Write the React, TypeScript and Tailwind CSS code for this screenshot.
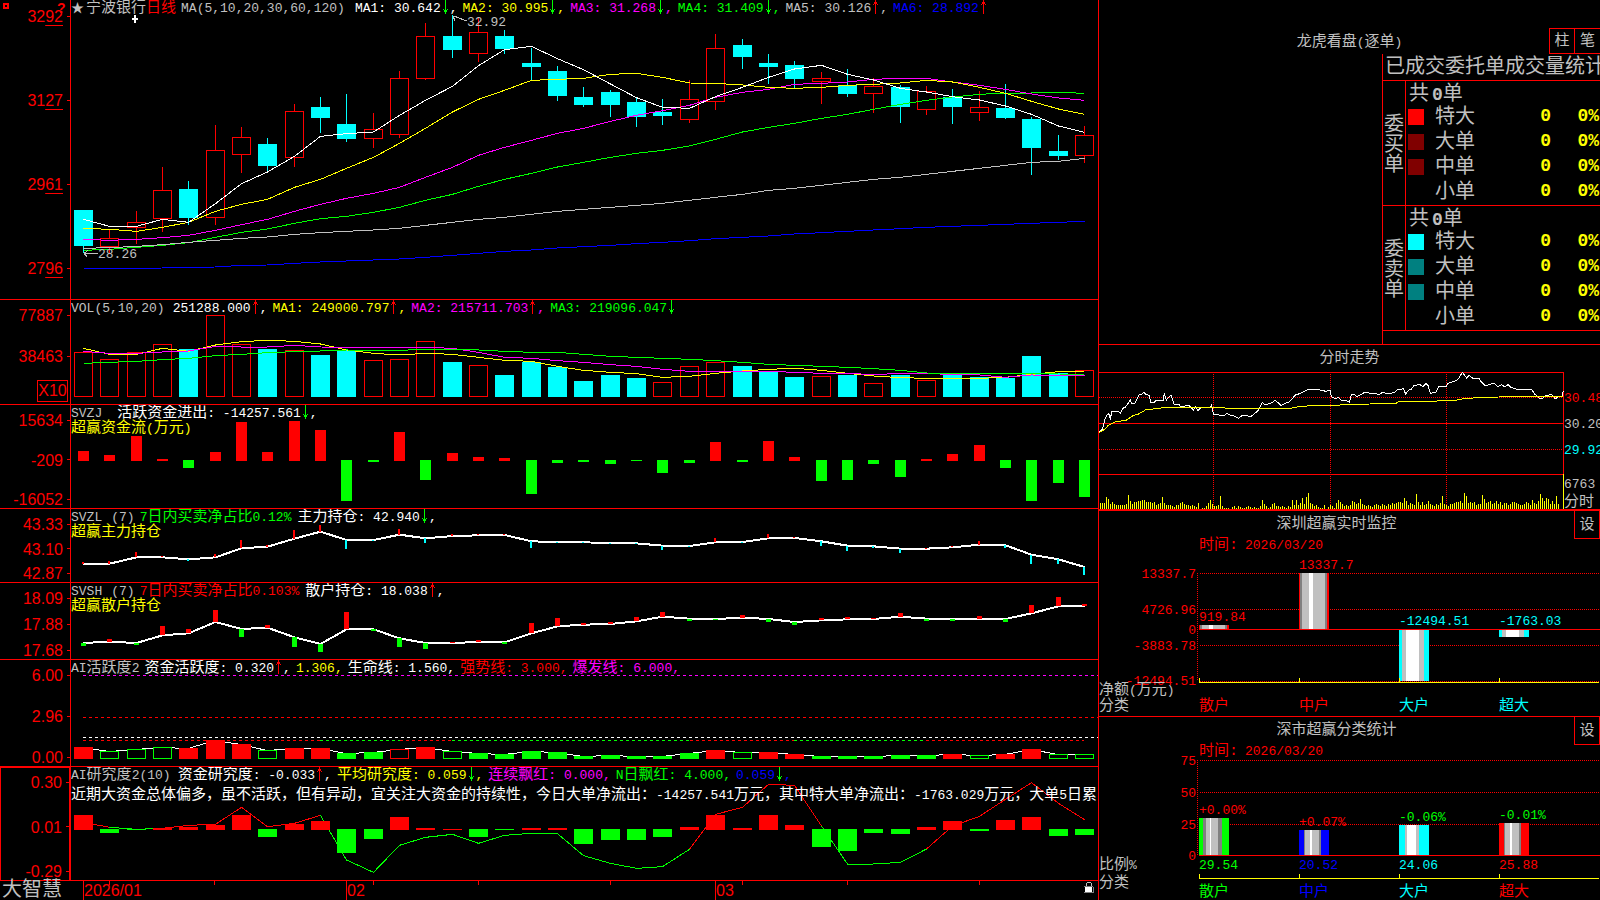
import type { ReactNode } from "react";

const STEP = 26.34;
const cx = (i: number) => Math.round(83 + STEP * i);

// kind, high, body top, body bottom, low
const candles: [string, number, number, number, number][] = [
  ["d", 210, 210, 246, 253], ["u", 230, 238, 246, 253], ["u", 211, 222, 227, 244], ["u", 167, 190, 218, 232],
  ["d", 181, 189, 218, 225], ["u", 125, 150, 217, 225], ["u", 127, 137, 154, 173], ["d", 138, 144, 166, 171],
  ["u", 104, 111, 157, 167], ["d", 97, 107, 118, 133], ["d", 94, 124, 139, 142], ["u", 113, 129, 138, 148],
  ["u", 71, 78, 134, 138], ["u", 23, 36, 78, 80], ["d", 15, 36, 50, 58], ["u", 18, 32, 53, 62],
  ["d", 30, 36, 49, 54], ["d", 48, 63, 67, 80], ["d", 66, 71, 96, 101], ["d", 87, 97, 105, 107],
  ["d", 90, 92, 105, 117], ["d", 97, 102, 117, 127], ["d", 99, 112, 116, 125], ["u", 80, 99, 119, 123],
  ["u", 34, 48, 101, 110], ["d", 39, 45, 57, 69], ["d", 54, 63, 67, 84], ["d", 61, 65, 79, 88],
  ["u", 72, 78, 81, 104], ["d", 69, 85, 94, 97], ["u", 78, 86, 93, 113], ["d", 85, 87, 107, 123],
  ["u", 86, 91, 109, 115], ["d", 89, 97, 107, 124], ["u", 91, 107, 112, 121], ["d", 84, 108, 118, 119],
  ["d", 117, 119, 148, 175], ["d", 135, 151, 156, 160], ["u", 126, 135, 155, 163],
];

// line values are stored in thirds of a pixel
const priceLines: [string, number[]][] = [
  ["#0000ff", [805, 805, 805, 804, 802, 801, 796, 795, 790, 786, 783, 780, 777, 772, 766, 760, 754, 750, 744, 740, 736, 731, 727, 722, 716, 712, 708, 702, 698, 694, 690, 686, 682, 679, 676, 673, 670, 667, 664]],
  ["#00ff00", [751, 748, 742, 736, 728, 712, 697, 687, 670, 656, 649, 637, 622, 601, 583, 559, 538, 520, 501, 487, 472, 460, 451, 438, 418, 396, 382, 370, 355, 343, 328, 313, 301, 291, 283, 279, 279, 277, 280]],
  ["#c0c0c0", [745, 743, 739, 734, 727, 721, 715, 711, 703, 698, 694, 690, 685, 676, 667, 658, 652, 643, 634, 628, 622, 616, 610, 601, 592, 583, 571, 565, 556, 547, 538, 532, 523, 514, 505, 496, 487, 484, 475]],
  ["#ff00ff", [718, 721, 718, 713, 706, 691, 674, 658, 634, 613, 595, 580, 562, 532, 502, 466, 442, 421, 400, 385, 364, 346, 332, 316, 292, 277, 268, 253, 250, 246, 238, 235, 235, 246, 256, 268, 282, 294, 301]],
  ["#ffff00", [685, 688, 694, 682, 667, 634, 613, 598, 562, 538, 505, 472, 430, 385, 336, 298, 271, 241, 238, 235, 223, 220, 232, 249, 250, 255, 262, 265, 262, 256, 253, 249, 241, 246, 262, 280, 304, 327, 343]],
  ["#ffffff", [658, 679, 679, 658, 667, 611, 551, 516, 469, 409, 401, 396, 346, 301, 259, 197, 149, 139, 176, 209, 252, 293, 322, 325, 290, 262, 232, 207, 196, 223, 240, 265, 276, 290, 300, 318, 343, 378, 397]],
];

const volumes: [string, number][] = [
  ["u", 352], ["u", 359], ["u", 352], ["u", 344], ["d", 349], ["u", 315], ["u", 344], ["d", 349], ["u", 350], ["d", 355],
  ["d", 350], ["u", 360], ["u", 359], ["u", 341], ["d", 362], ["u", 365], ["d", 375], ["d", 362], ["d", 367], ["d", 381],
  ["d", 375], ["d", 378], ["u", 382], ["u", 366], ["u", 362], ["d", 366], ["d", 371], ["d", 377], ["u", 376], ["d", 375],
  ["u", 383], ["d", 375], ["u", 380], ["d", 374], ["d", 377], ["d", 378], ["d", 356], ["d", 373], ["u", 370],
];

const volumeLines: [string, number[]][] = [
  ["#ffff00", [160, 178, 178, 160, 169, 150, 140, 136, 139, 147, 165, 175, 180, 175, 178, 187, 196, 199, 214, 226, 232, 236, 247, 244, 235, 228, 223, 220, 226, 235, 243, 248, 250, 250, 250, 247, 238, 230, 229]],
  ["#ff00ff", [169, 175, 175, 171, 168, 154, 156, 156, 151, 156, 157, 157, 157, 157, 160, 172, 187, 190, 197, 202, 209, 214, 223, 229, 229, 229, 229, 232, 235, 236, 238, 236, 236, 238, 240, 247, 240, 241, 241]],
  ["#00ff00", [205, 202, 199, 194, 190, 182, 178, 173, 170, 168, 165, 166, 166, 163, 163, 165, 169, 172, 172, 178, 184, 187, 190, 193, 197, 202, 208, 211, 214, 217, 221, 226, 234, 235, 235, 237, 236, 237, 238]],
];

const flows = [10, 6, 25, 2, -8, 9, 39, 9, 40, 31, -41, -2, 29, -20, 8, 4, 3, -34, -3, -2, -4, -1, -13, -3, 19, -2, 20, 4, -21, -20, -4, -17, 2, 7, 16, -8, -41, -23, -37];

const mainHold = [177, 176, 157, 157, 163, 157, 130, 125, 101, 80, 105, 105, 89, 100, 93, 91, 90, 109, 111, 112, 114, 115, 122, 123, 112, 111, 100, 99, 109, 122, 124, 131, 131, 127, 119, 121, 149, 163, 186];
const mainDelta = [2, 3, 5, 1, -2, 3, 8, 2, 9, 7, -9, -1, 6, -5, 2, 1, 1, -7, -1, -1, -1, -1, -4, -1, 4, -1, 4, 1, -5, -5, -2, -4, 1, 1, 4, -3, -9, -5, -8];
const retailHold = [414, 410, 414, 391, 385, 351, 372, 368, 397, 417, 373, 373, 400, 414, 414, 411, 412, 385, 364, 359, 357, 349, 335, 341, 342, 338, 342, 351, 346, 343, 342, 335, 341, 342, 342, 342, 325, 304, 302];
const retailDelta = [-3, 3, -2, 9, 4, 12, -8, 3, -10, -8, 17, -2, -9, -6, 1, 2, -2, 10, 8, 2, 2, 4, 5, -2, -1, 3, -3, -3, 2, 2, 1, 4, -2, -2, 3, -3, 8, 9, 2];

const activity = [12, 8, 10, 12, 11, 19, 15, 9, 11, 11, 6, 7, 10, 12, 8, 6, 5, 8, 7, 3, 4, 3, 3, 6, 9, 7, 7, 5, 3, 3, 3, 4, 4, 5, 4, 5, 10, 5, 5];
// R/G solid, r/g hollow
const activityKinds = "RgggRRRgRRGGrRgGGGGGGGGGRgRRGGGGGRgRRgg";

const study = [15, -4, -1, 2, 3, 5, 15, -8, 6, 9, -24, -10, 13, 2, 1, -8, -1, 2, 2, -15, -11, -11, -8, 3, 15, 2, 15, 5, -18, -22, -4, -5, 3, 9, -2, 10, 13, -7, -6];
const studyLine = [367, 382, 388, 385, 376, 373, 322, 380, 370, 346, 480, 517, 436, 412, 403, 430, 406, 400, 401, 467, 490, 505, 500, 448, 343, 322, 253, 256, 378, 492, 492, 487, 447, 378, 349, 298, 248, 310, 359];
const studySegments: [number, number, string][] = [
  [0, 1, "#ff0000"], [1, 3, "#00ff00"], [3, 9, "#ff0000"], [9, 23, "#00ff00"], [23, 28, "#ff0000"], [28, 32, "#00ff00"], [32, 38, "#ff0000"],
];

const minutePrice =
  "28,276 38,266 44,240 50,226 56,220 61,236 66,213 86,214 91,220 98,205 106,202 121,180 124,190 134,190 147,164 156,162 161,157 166,162 177,166 183,188 191,188 200,180 220,180 223,160 229,180 236,172 243,166 252,192 266,192 272,200 296,196 310,210 318,200 324,212 332,204 360,203 364,197 371,223 396,226 402,228 410,220 422,226 432,228 446,235 454,228 466,226 482,230 492,222 504,212 517,188 524,194 542,190 556,181 574,197 584,190 598,186 616,165 632,160 652,149 690,150 708,154 720,150 724,170 736,176 744,172 756,183 766,180 778,187 784,164 792,162 800,170 812,164 822,158 850,160 868,163 880,156 890,162 912,158 922,150 940,146 947,162 956,150 964,148 972,136 990,134 998,140 1008,130 1014,136 1021,160 1038,156 1046,140 1068,140 1074,130 1092,124 1104,118 1117,97 1124,106 1130,114 1138,106 1150,116 1166,114 1172,124 1186,138 1204,132 1214,130 1222,140 1234,134 1244,140 1254,134 1262,142 1282,148 1326,150 1334,162 1350,176 1360,174 1366,166 1386,164 1396,177 1404,170 1416,168 1420,152";
const minuteAverage =
  "28,277 44,268 54,257 74,246 110,240 130,226 146,222 166,210 190,207 222,203 402,203 408,205 600,205 628,200 664,197 748,196 752,193 842,192 846,189 920,189 924,186 970,185 1040,184 1044,181 1098,181 1120,176 1166,173 1226,171 1232,169 1420,169";
// one base-36 digit per bar
const minuteVolume =
  "666ca575444445e8577889977767456c6444324467544343260113695334d31110231321123212113953125633232132949" +
  "46b5cg6534211402431697534348756a543432454354354656776" +
  "b84654f74745854354" +
  "6d543556778" +
  "6gd676745" +
  "5ea678568574664577654457649658fb8ba585d5";

const fonts = "font-['Liberation_Mono','Noto_Sans_CJK_SC',monospace]";

const trace = (values: number[], origin: number, from = 0) =>
  values.map((v, i) => `${cx(i + from) + 0.5},${origin + v / 3}`).join(" ");

// Chinese runs are set larger than the half-width characters around them
function Mixed({ text }: { text: string }) {
  return (
    <>
      {text.split(/([\u2e80-\u9fff\uff00-\uffef]+)/).map((part, i) =>
        i % 2 ? <span key={i} className="text-[15px]">{part}</span> : part
      )}
    </>
  );
}

function Arrow({ up }: { up?: boolean }) {
  return (
    <svg viewBox="0 0 9 16" className="w-[9px] h-4 shrink-0" shapeRendering="crispEdges">
      {up ? (
        <path d="M4 0h1v14H4zM3 2h3v2H3zM2 4h1v1H2zM6 4h1v1H6z" fill="#ff0000" />
      ) : (
        <path d="M4 0h1v14H4zM3 10h3v2H3zM2 9h1v1H2zM6 9h1v1H6z" fill="#00ff00" />
      )}
    </svg>
  );
}

type Item = { text: string; color: string; arrow?: "up" | "down"; comma?: boolean };

function Legend({ items }: { items: Item[] }) {
  return (
    <div className="flex h-4 items-center gap-[5px] leading-[18px]">
      {items.map((item, i) => (
        <span key={i} className={`flex h-4 shrink-0 ${item.color}`}>
          <span><Mixed text={item.text} /></span>
          {item.arrow && <Arrow up={item.arrow === "up"} />}
          {item.comma && <span>,</span>}
        </span>
      ))}
    </div>
  );
}

function Tick({ label, underlined }: { label: string; underlined?: boolean }) {
  return (
    <div className="flex h-[18px] items-center justify-end gap-1 text-base leading-[18px]">
      <span className="pt-0.5">
        {underlined ? (
          <>
            {label.slice(0, 2)}
            <span className="underline decoration-1 underline-offset-[3px]">{label.slice(2)}</span>
          </>
        ) : label}
      </span>
      <span className="w-[3px] h-px bg-[#ff0000]" />
    </div>
  );
}

function Axis({ className = "", children }: { className?: string; children: ReactNode }) {
  return (
    <div className={`relative flex w-[71px] shrink-0 flex-col justify-between border-r border-[#ff0000] font-['Liberation_Sans',sans-serif] text-[#ff0000] ${className}`}>
      {children}
    </div>
  );
}

function Panel({ axis, header, top, height, children }: { axis: ReactNode; header: ReactNode; top: number; height: number; children: ReactNode }) {
  return (
    <section className="flex border-b border-[#ff0000]">
      {axis}
      <div className="grid min-w-0 flex-1 overflow-hidden">
        <svg
          viewBox={`71 ${top} 1027 ${height}`}
          preserveAspectRatio="none"
          shapeRendering="crispEdges"
          fill="none"
          className="[grid-area:1/1] w-full"
          style={{ height }}
        >
          {children}
        </svg>
        <div className="[grid-area:1/1] min-w-0 overflow-hidden whitespace-pre">{header}</div>
      </div>
    </section>
  );
}

function PricePanel() {
  return (
    <Panel
      top={0}
      height={299}
      axis={
        <Axis className="pt-[7px] pb-[22px]">
          <span className="absolute top-[3px] left-[3px] size-[6px] border-2 border-[#ff0000]" />
          <span className="absolute top-0 left-[57px] text-sm font-bold leading-4">?</span>
          {["3292", "3127", "2961", "2796"].map((t) => <Tick key={t} label={t} underlined />)}
        </Axis>
      }
      header={
        <Legend
          items={[
            { text: "★", color: "text-[#c0c0c0]" },
            { text: "宁波银行", color: "text-[#c0c0c0] -ml-[3px]" },
            { text: "日线", color: "text-[#ff0000] -ml-[5px]" },
            { text: "MA(5,10,20,30,60,120)", color: "text-[#c0c0c0] mr-[5px]" },
            { text: "MA1: 30.642", color: "text-white", arrow: "down", comma: true },
            { text: "MA2: 30.995", color: "text-[#ffff00]", arrow: "down", comma: true },
            { text: "MA3: 31.268", color: "text-[#ff00ff]", arrow: "down", comma: true },
            { text: "MA4: 31.409", color: "text-[#00ff00]", arrow: "down", comma: true },
            { text: "MA5: 30.126", color: "text-[#c0c0c0]", arrow: "up", comma: true },
            { text: "MA6: 28.892", color: "text-[#0000ff]", arrow: "up" },
          ]}
        />
      }
    >
      {candles.map(([kind, hi, top, bottom, lo], i) =>
        kind === "u" ? (
          <g key={i} stroke="#ff0000">
            <path d={`M${cx(i) + 0.5} ${hi}V${top}M${cx(i) + 0.5} ${bottom}V${lo}`} />
            <rect x={cx(i) - 8.5} y={top + 0.5} width="18" height={bottom - top} />
          </g>
        ) : (
          <g key={i} fill="#00ffff">
            <rect x={cx(i)} y={hi} width="1" height={lo - hi} />
            <rect x={cx(i) - 9} y={top} width="19" height={bottom - top} />
          </g>
        )
      )}
      {priceLines.map(([color, values]) => (
        <polyline key={color} points={trace(values, 0)} stroke={color} />
      ))}
      <g stroke="#c0c0c0">
        <path d="M453 16l14 5M453 16l4 0M453 16l2 5" />
        <path d="M84 253.500h14M84 253.500l4 -3M84 253.500l3 3" />
      </g>
      <g fill="#c0c0c0" className="text-[13px]">
        <text x="467" y="26">32.92</text>
        <text x="98" y="258">28.26</text>
      </g>
      <path d="M134 15h2v8h-2zM132 18h6v2h-6z" fill="#fff" />
    </Panel>
  );
}

function VolumePanel() {
  return (
    <Panel
      top={300}
      height={104}
      axis={
        <Axis className="pt-[6px] pb-[2px]">
          <div className="flex flex-col gap-[23px]">
            <Tick label="77887" />
            <Tick label="38463" />
          </div>
          <div className="mr-[2px] flex h-[22px] w-[31px] items-center justify-center self-end border border-[#ff0000] text-base">X10</div>
        </Axis>
      }
      header={
        <Legend
          items={[
            { text: "VOL(5,10,20)", color: "text-[#c0c0c0] mr-[3px]" },
            { text: "251288.000", color: "text-white", arrow: "up", comma: true },
            { text: "MA1: 249000.797", color: "text-[#ffff00]", arrow: "up", comma: true },
            { text: "MA2: 215711.703", color: "text-[#ff00ff]", arrow: "up", comma: true },
            { text: "MA3: 219096.047", color: "text-[#00ff00]", arrow: "down" },
          ]}
        />
      }
    >
      {volumes.map(([kind, top], i) =>
        kind === "u" ? (
          <rect key={i} x={cx(i) - 8.5} y={top + 0.5} width="18" height={396 - top} stroke="#ff0000" />
        ) : (
          <rect key={i} x={cx(i) - 9} y={top} width="19" height={397 - top} fill="#00ffff" />
        )
      )}
      {volumeLines.map(([color, values]) => (
        <polyline key={color} points={trace(values, 295)} stroke={color} />
      ))}
    </Panel>
  );
}

function Bars({ values, zero, width }: { values: number[]; zero: number; width: number }) {
  return (
    <>
      {values.map((v, i) => (
        <rect
          key={i}
          x={cx(i) - (width - 1) / 2}
          y={v > 0 ? zero + 1 - v : zero}
          width={width}
          height={Math.abs(v)}
          fill={v > 0 ? "#ff0000" : "#00ff00"}
        />
      ))}
    </>
  );
}

function HoldLine({ values, deltas, width, down }: { values: number[]; deltas: number[]; width: number; down: string }) {
  return (
    <>
      <polyline points={trace(values, 505)} stroke="#fff" strokeWidth="2" />
      {deltas.map((d, i) => {
        const y = Math.round(505 + values[i] / 3);
        return (
          <rect
            key={i}
            x={cx(i) - Math.floor(width / 2)}
            y={d > 0 ? y - d : y}
            width={width}
            height={Math.abs(d)}
            fill={d > 0 ? "#ff0000" : down}
          />
        );
      })}
    </>
  );
}

function Charts() {
  return (
    <>
      <PricePanel />
      <VolumePanel />
      <Panel
        top={405}
        height={103}
        axis={<Axis className="pt-[6px]"><Tick label="15634" /><Tick label="-209" /><Tick label="-16052" /></Axis>}
        header={
          <>
            <Legend
              items={[
                { text: "SVZJ", color: "text-[#c0c0c0] mr-2.5" },
                { text: "活跃资金进出: -14257.561", color: "text-white", arrow: "down", comma: true },
              ]}
            />
            <div className="leading-4 text-[#ffff00]"><Mixed text="超赢资金流(万元)" /></div>
          </>
        }
      >
        <Bars values={flows} zero={460} width={11} />
      </Panel>
      <Panel
        top={509}
        height={73}
        axis={<Axis className="pt-[6px]"><Tick label="43.33" /><Tick label="43.10" /><Tick label="42.87" /></Axis>}
        header={
          <>
            <Legend
              items={[
                { text: "SVZL", color: "text-[#c0c0c0] mr-1" },
                { text: "(7)", color: "text-[#c0c0c0]" },
                { text: "7日内买卖净占比0.12%", color: "text-[#00ff00] mr-px" },
                { text: "主力持仓: 42.940", color: "text-white", arrow: "down", comma: true },
              ]}
            />
            <div className="leading-4 text-[#ffff00]"><Mixed text="超赢主力持仓" /></div>
          </>
        }
      >
        <HoldLine values={mainHold} deltas={mainDelta} width={2} down="#00ffff" />
      </Panel>
      <Panel
        top={583}
        height={76}
        axis={<Axis className="pt-[6px]"><Tick label="18.09" /><Tick label="17.88" /><Tick label="17.68" /></Axis>}
        header={
          <>
            <Legend
              items={[
                { text: "SVSH", color: "text-[#c0c0c0] mr-1" },
                { text: "(7)", color: "text-[#c0c0c0]" },
                { text: "7日内买卖净占比0.103%", color: "text-[#ff0000] mr-px" },
                { text: "散户持仓: 18.038", color: "text-white", arrow: "up", comma: true },
              ]}
            />
            <div className="leading-4 text-[#ffff00]"><Mixed text="超赢散户持仓" /></div>
          </>
        }
      >
        <HoldLine values={retailHold} deltas={retailDelta} width={5} down="#00ff00" />
      </Panel>
      <Panel
        top={660}
        height={106}
        axis={<Axis className="pt-[6px]"><Tick label="6.00" /><Tick label="2.96" /><Tick label="0.00" /></Axis>}
        header={
          <Legend
            items={[
              { text: "AI活跃度2", color: "text-[#c0c0c0]" },
              { text: "资金活跃度: 0.320", color: "text-white", arrow: "up", comma: true },
              { text: "1.306,", color: "text-[#ffff00]" },
              { text: "生命线: 1.560,", color: "text-white" },
              { text: "强势线: 3.000,", color: "text-[#ff0000]" },
              { text: "爆发线: 6.000,", color: "text-[#ff00ff]" },
            ]}
          />
        }
      >
        <g strokeDasharray="3 3">
          <path d="M83 675.500H1098" stroke="#ff00ff" />
          <path d="M83 717.500H1098" stroke="#ff0000" />
          <path d="M83 737.500H1098" stroke="#fff" />
          <path d="M83 740.500H320M400 740.500H452M690 740.500H794M926 740.500H1084" stroke="#ff0000" />
          <path d="M320 740.500H400M452 740.500H690M794 740.500H926" stroke="#00ff00" />
        </g>
        <polyline points={activity.map((h, i) => `${cx(i)},${759.5 - h}`).join(" ")} stroke="#fff" />
        {activity.map((h, i) => {
          const kind = activityKinds[i];
          const color = kind.toUpperCase() === "R" ? "#ff0000" : "#00ff00";
          return (
            <rect
              key={i}
              x={cx(i) - 8.5}
              y={759.5 - h}
              width="18"
              height={h - 1}
              stroke={color}
              fill={kind === kind.toUpperCase() ? color : "#000"}
            />
          );
        })}
      </Panel>
      <Panel
        top={767}
        height={113}
        axis={<Axis className="border-t border-l border-r-2 pt-[5px]"><Tick label="0.30" /><Tick label="0.01" /><Tick label="-0.29" /></Axis>}
        header={
          <>
            <Legend
              items={[
                { text: "AI研究度2(10)", color: "text-[#c0c0c0] mr-0.5" },
                { text: "资金研究度: -0.033", color: "text-white", arrow: "up", comma: true },
                { text: "平均研究度: 0.059", color: "text-[#ffff00]", arrow: "down", comma: true },
                { text: "连续飘红: 0.000,", color: "text-[#ff00ff]" },
                { text: "N日飘红: 4.000,", color: "text-[#00ff00]" },
                { text: "0.059", color: "text-[#0000ff]", arrow: "down", comma: true },
              ]}
            />
            <p className="mt-1 leading-[18px] text-white">
              <Mixed text="近期大资金总体偏多，虽不活跃，但有异动，宜关注大资金的持续性，今日大单净流出：-14257.541万元，其中特大单净流出：-1763.029万元，大单5日累" />
            </p>
          </>
        }
      >
        {studySegments.map(([from, to, color]) => (
          <polyline key={from} points={trace(studyLine.slice(from, to + 1), 700, from)} stroke={color} />
        ))}
        <Bars values={study} zero={829} width={19} />
      </Panel>
    </>
  );
}

function Timeline() {
  return (
    <footer className="flex h-[19px]">
      <span className="w-[71px] shrink-0 pl-[2px] text-xl leading-[19px] whitespace-nowrap text-[#c0c0c0]">大智慧</span>
      <div className="grid min-w-0 flex-1">
        <svg viewBox="71 881 1027 19" preserveAspectRatio="none" shapeRendering="crispEdges" className="[grid-area:1/1] h-[19px] w-full">
          <path d="M109.500 881v4M214.500 881v4M373.500 881v4M478.500 881v4M610.500 881v4M742.500 881v4M847.500 881v4M979.500 881v4" stroke="#ff0000" />
        </svg>
        <div className="[grid-area:1/1] grid grid-cols-[12fr_263fr_369fr_383fr] font-['Liberation_Sans',sans-serif] text-base leading-[19px] text-[#ff0000]">
          <span />
          <span className="border-l border-[#ff0000]">2026/01</span>
          <span className="border-l border-[#ff0000]">02</span>
          <span className="flex items-start justify-between border-l border-[#ff0000]">
            03
            <svg viewBox="0 0 10 12" className="mt-px mr-1 h-3 w-2.5" shapeRendering="crispEdges">
              <path d="M2 4V1h1V0h4v1h1v3H7V1H3v3z" fill="#c0c0c0" />
              <path d="M1 5h7v5H1z" fill="#fff" />
              <path d="M0 4h9v1H0zM9 5h1v6H0v-1h9z" fill="#808080" />
            </svg>
          </span>
        </div>
      </div>
    </footer>
  );
}

const orderGroups = [
  { side: "委买单", rows: [["特大", "bg-[#ff0000]"], ["大单", "bg-[#800000]"], ["中单", "bg-[#800000]"], ["小单", ""]] },
  { side: "委卖单", rows: [["特大", "bg-[#00ffff]"], ["大单", "bg-[#008080]"], ["中单", "bg-[#008080]"], ["小单", ""]] },
];

function OrderPanel() {
  return (
    <section className="flex h-[345px] flex-col overflow-hidden border-b border-[#ff0000] text-[#c0c0c0]">
      <header className="grid h-[54px] grid-cols-[1fr_auto_1fr] items-end">
        <h2 className="col-start-2 pb-[3px] leading-4"><Mixed text="龙虎看盘(逐单)" /></h2>
        <div className="flex justify-end">
          <button type="button" className="size-[26px] border border-[#ff0000] pt-0.5 text-[15px] leading-4">柱</button>
          <button type="button" className="h-[26px] w-[25px] border-y border-[#ff0000] pt-0.5 text-[15px] leading-4">笔</button>
        </div>
      </header>
      <div className="ml-auto w-[218px] flex-1 border-l border-[#ff0000] text-xl">
        <h3 className="h-[27px] border-b border-[#ff0000] pl-[2px] leading-7 whitespace-nowrap">已成交委托单成交量统计</h3>
        {orderGroups.map((group) => (
          <div key={group.side} className="flex h-[125px] border-b border-[#ff0000]">
            <div className="flex w-[23px] items-center border-r border-[#ff0000] pt-1.5 pl-px leading-5">
              <span className="w-5 break-all">{group.side}</span>
            </div>
            <table className="flex-1 table-fixed leading-6">
              <caption className="h-6 pl-[3px] text-left leading-[26px]">
                共<span className="pl-[3px] text-lg font-bold">0</span>单
              </caption>
              <tbody>
                {group.rows.map(([name, swatch]) => (
                  <tr key={name} className="h-[25px]">
                    <td className="w-[29px] p-0 pb-0.5 pl-[2px]"><span className={`block size-4 ${swatch}`} /></td>
                    <th scope="row" className="w-[60px] p-0 text-left font-normal">{name}</th>
                    <td className="p-0 pb-0.5 text-right text-lg leading-[23px] font-bold text-[#ffff00]">0</td>
                    <td className="w-[49px] p-0 pr-px pb-0.5 text-right text-lg leading-[23px] font-bold text-[#ffff00]">0%</td>
                  </tr>
                ))}
              </tbody>
            </table>
          </div>
        ))}
      </div>
    </section>
  );
}

function MinutePanel() {
  return (
    <section className="flex h-[166px] flex-col overflow-hidden border-b-2 border-[#ff0000] text-[#c0c0c0]">
      <h2 className="h-[27px] text-center text-[15px] leading-7">分时走势</h2>
      <div className="flex">
        <svg viewBox="27 96 1395 411" preserveAspectRatio="none" className="h-[137px] min-w-0 flex-1" fill="none" shapeRendering="crispEdges">
          <g stroke="#ff0000" strokeWidth="3">
            <path d="M27 97.500H1422M27 250.500H1422M27 403.500H1422M1420.500 96V507" />
            <path d="M27 172.500H1422M27 328.500H1422M370.500 96V507M721.500 96V507M1069.500 96V507" strokeDasharray="3 3" />
          </g>
          {minuteVolume.split("").map((h, i) => (
            <rect key={i} x={30 + i * 6} y={507 - parseInt(h, 36) * 3} width="3" height={parseInt(h, 36) * 3} fill="#ffff00" />
          ))}
          <path d="M1420.500 403V507" stroke="#ffff00" strokeWidth="3" />
          <polyline points={minutePrice} stroke="#fff" strokeWidth="3" />
          <polyline points={minuteAverage} stroke="#ffff00" strokeWidth="3" />
        </svg>
        <ul className="w-9 overflow-hidden pt-[18px] leading-[18px] whitespace-nowrap">
          <li className="mb-2 text-[#ff0000]">30.48</li>
          <li className="mb-2">30.20</li>
          <li className="mb-4 text-[#00ffff]">29.92</li>
          <li>6763</li>
          <li className="text-[15px] leading-[17px]">分时</li>
        </ul>
      </div>
    </section>
  );
}

type Column = {
  name: string;
  color: string;
  y: number;
  height: number;
  label: string;
  labelY: number;
  labelColor: string;
  value?: string;
  stripes: [number, string][];
};

const D = "#808080";
const L = "#c0c0c0";
const W = "#ffffff";

const netColumns: Column[] = [
  { name: "散户", color: "#ff0000", y: 114, height: 4, label: "919.84", labelY: 110, labelColor: "#ff0000", stripes: [[1, "#ff0000"], [2, D], [7, L], [4, W], [12, L], [2, D], [2, "#ff0000"]] },
  { name: "中户", color: "#ff0000", y: 62, height: 56, label: "13337.7", labelY: 58, labelColor: "#ff0000", stripes: [[1, "#ff0000"], [2, D], [7, L], [4, W], [12, L], [2, D], [2, "#ff0000"]] },
  { name: "大户", color: "#00ffff", y: 119, height: 51, label: "-12494.51", labelY: 114, labelColor: "#00ffff", stripes: [[3, "#00ffff"], [4, L], [13, W], [5, L], [5, "#00ffff"]] },
  { name: "超大", color: "#00ffff", y: 119, height: 7, label: "-1763.03", labelY: 114, labelColor: "#00ffff", stripes: [[3, "#00ffff"], [4, L], [13, W], [5, L], [5, "#00ffff"]] },
];

const shareColumns: Column[] = [
  { name: "散户", color: "#00ff00", y: 101, height: 37, label: "+0.00%", labelY: 97, labelColor: "#ff0000", value: "29.54", stripes: [[4, "#00ff00"], [3, D], [4, L], [1, W], [7, L], [4, D], [7, "#00ff00"]] },
  { name: "中户", color: "#0000ff", y: 113, height: 25, label: "+0.07%", labelY: 109, labelColor: "#ff0000", value: "20.52", stripes: [[5, "#0000ff"], [1, D], [5, L], [2, W], [7, L], [2, D], [8, "#0000ff"]] },
  { name: "大户", color: "#00ffff", y: 108, height: 30, label: "-0.06%", labelY: 104, labelColor: "#00ff00", value: "24.06", stripes: [[6, "#00ffff"], [2, L], [9, W], [3, L], [10, "#00ffff"]] },
  { name: "超大", color: "#ff0000", y: 106, height: 32, label: "-0.01%", labelY: 102, labelColor: "#00ff00", value: "25.88", stripes: [[5, "#ff0000"], [1, D], [5, L], [2, W], [7, L], [2, D], [8, "#ff0000"]] },
];

function ColumnChart({ title, columns, height, axis, grid, zero, base, nameY, unit, unitY, kindY }: {
  title: string;
  columns: Column[];
  height: number;
  axis: [string, number][];
  grid: number[];
  zero: number;
  base: number;
  nameY: number;
  unit: string;
  unitY: number;
  kindY: number;
}) {
  return (
    <section className="grid overflow-hidden border-b border-[#ff0000] text-[#c0c0c0] last:border-b-0">
      <header className="[grid-area:1/1] grid h-[25px] grid-cols-[1fr_26px]">
        <h2 className="text-center text-[15px] leading-7">{title}</h2>
        <button type="button" className="border border-t-0 border-[#ff0000] pt-0.5 text-[15px] leading-4">设</button>
      </header>
      <svg width="501" height={height} viewBox={`0 0 501 ${height}`} className="[grid-area:1/1] pointer-events-none text-[13px]" shapeRendering="crispEdges">
        <path
          d={grid.map((y) => `M101 ${y + 0.5}H501`).join("") + `M98.500 ${grid[0]}V${grid[grid.length - 1]}`}
          stroke="#ff0000"
          strokeDasharray="1 1"
        />
        {columns.map((c, i) => {
          let x = 100 + i * 100;
          return (
            <g key={c.name}>
              {c.stripes.map(([w, fill], k) => {
                const at = x;
                x += w;
                return <rect key={k} x={at} y={c.y} width={w} height={c.height} fill={fill} />;
              })}
              <text x={100 + i * 100} y={c.labelY} fill={c.labelColor}>{c.label}</text>
              {c.value && <text x={100 + i * 100} y={152} fill={c.color}>{c.value}</text>}
              <text x={100 + i * 100} y={nameY} fill={c.color} className="text-[15px]">{c.name}</text>
            </g>
          );
        })}
        <path d={`M100 ${zero + 0.5}H501`} stroke="#ff0000" />
        <path d={`M100 ${base + 0.5}H500M100.500 ${base}v-4M200.500 ${base}v-4M300.500 ${base}v-4M400.500 ${base}v-4`} stroke="#ffff00" />
        <text x="100" y="38" fill="#ff0000">
          <tspan className="text-[15px]">时间:</tspan>
          <tspan x="146">2026/03/20</tspan>
        </text>
        {axis.map(([label, y]) => (
          <text key={label} x="97" y={y} textAnchor="end" fill="#ff0000">{label}</text>
        ))}
        <text x="0" y={unitY} fill="#c0c0c0"><Spans text={unit} /></text>
        <text x="0" y={kindY} fill="#c0c0c0" className="text-[15px]">分类</text>
      </svg>
    </section>
  );
}

function Spans({ text }: { text: string }) {
  return (
    <>
      {text.split(/([\u4e00-\u9fff]+)/).map((part, i) => (
        <tspan key={i} className={i % 2 ? "text-[15px]" : ""}>{part}</tspan>
      ))}
    </>
  );
}

export default function App() {
  return (
    <main className={`flex min-h-screen overflow-hidden bg-black text-[13px] ${fonts}`}>
      <div className="flex min-w-0 flex-1 flex-col">
        <Charts />
        <Timeline />
      </div>
      <aside className="w-[502px] shrink-0 border-l border-[#ff0000]">
        <OrderPanel />
        <MinutePanel />
        <ColumnChart
          title="深圳超赢实时监控"
          columns={netColumns}
          height={205}
          axis={[["13337.7", 67], ["4726.96", 103], ["0", 123], ["-3883.78", 139], ["-12494.51", 174]]}
          grid={[62, 98, 134, 170]}
          zero={118}
          base={171}
          nameY={199}
          unit="净额(万元)"
          unitY={183}
          kindY={199}
        />
        <ColumnChart
          title="深市超赢分类统计"
          columns={shareColumns}
          height={183}
          axis={[["75", 48], ["50", 80], ["25", 112], ["0", 143]]}
          grid={[43, 75, 107, 138]}
          zero={138}
          base={161}
          nameY={179}
          unit="比例%"
          unitY={152}
          kindY={170}
        />
      </aside>
    </main>
  );
}
